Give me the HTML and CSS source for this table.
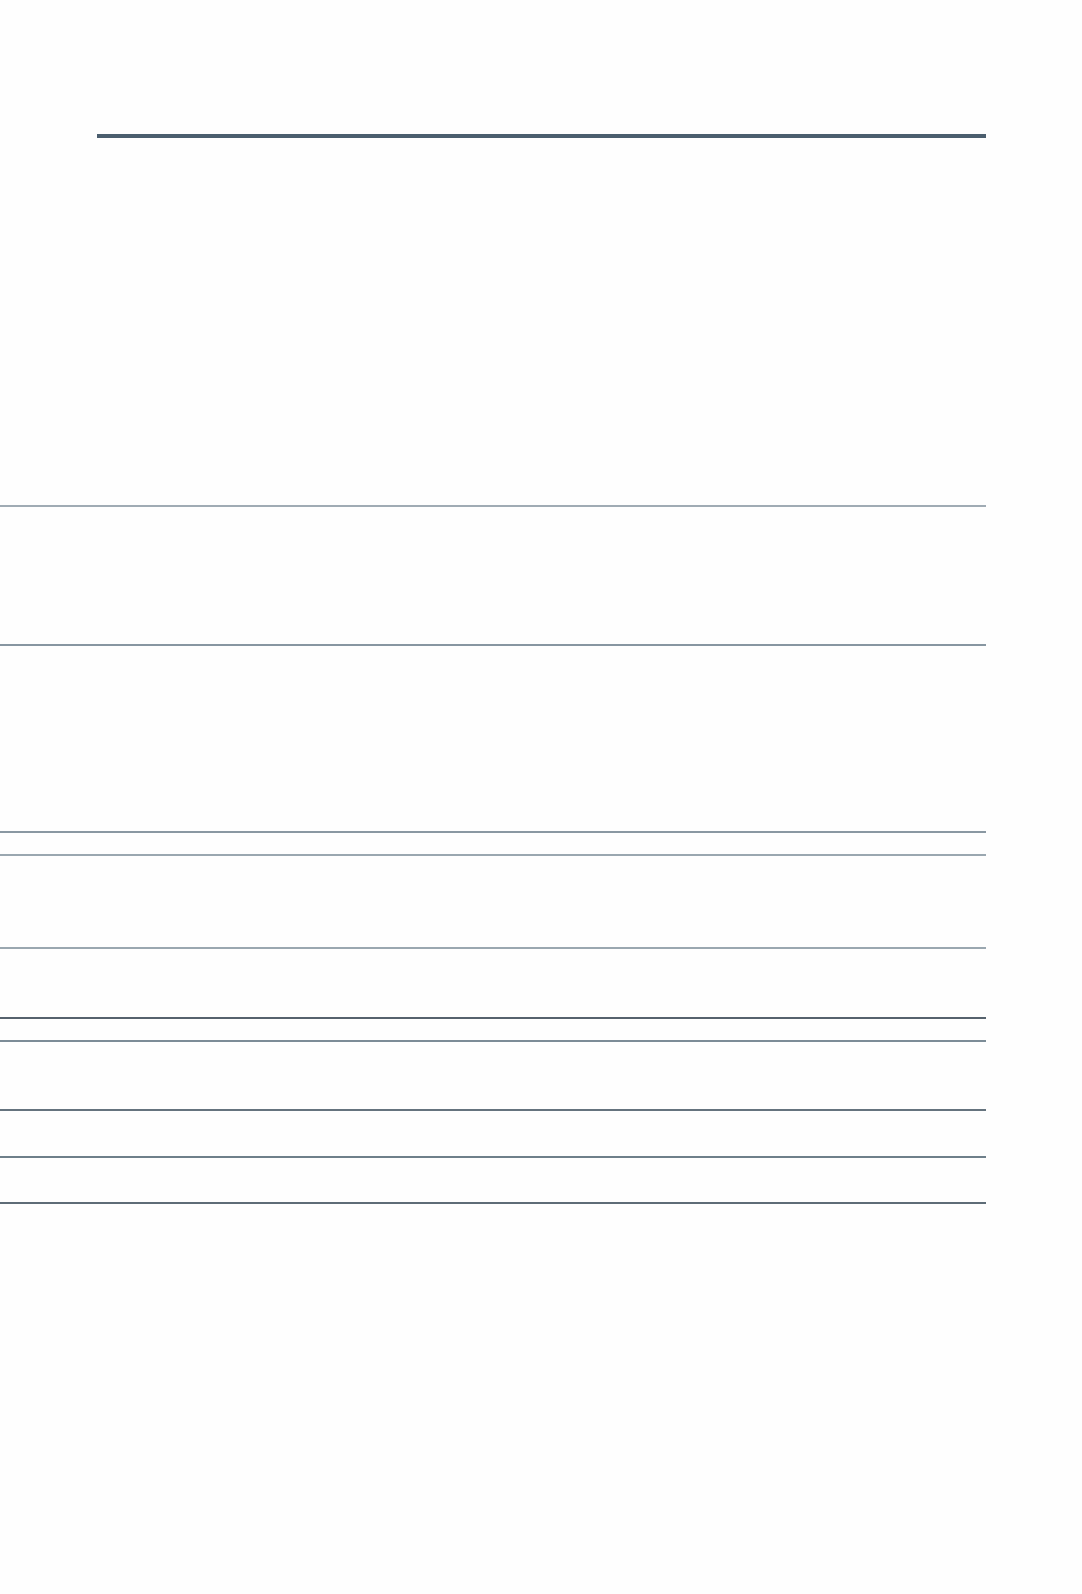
FILE: index.html
```html
<!DOCTYPE html>
<html lang="en">
<head>
    <meta charset="UTF-8">
    <meta name="viewport" content="width=device-width, initial-scale=1.0">
    <title>Sheet</title>
    <link rel="stylesheet" href="styles.css">
</head>
<body>
    <div class="sheet">
        <div class="sheet-rule"></div>
        <div class="sheet-head"></div>
        <div class="sheet-body">
            <div class="row row-1 first"><span></span><span></span><span></span><span></span><span></span><span></span><span></span><span></span></div>
            <div class="row row-2"><span></span><span></span><span></span><span></span><span></span><span></span><span></span><span></span></div>
            <div class="row row-3"><span></span><span></span><span></span><span></span><span></span><span></span><span></span><span></span></div>
            <div class="row row-4"><span></span><span></span><span></span><span></span><span></span><span></span><span></span><span></span></div>
            <div class="row row-5"><span></span><span></span><span></span><span></span><span></span><span></span><span></span><span></span></div>
            <div class="row row-6"><span></span><span></span><span></span><span></span><span></span><span></span><span></span><span></span></div>
            <div class="row row-7"><span></span><span></span><span></span><span></span><span></span><span></span><span></span><span></span></div>
            <div class="row row-8"><span></span><span></span><span></span><span></span><span></span><span></span><span></span><span></span></div>
            <div class="row row-9"><span></span><span></span><span></span><span></span><span></span><span></span><span></span><span></span></div>
        </div>
    </div>
</body>
</html>
```

FILE: styles.css
```css
body {
    margin: 0;
    padding: 0;
    background-color: #fefefe;
    font-family: "Liberation Sans", Arial, sans-serif;
}
.sheet {
    width: 986px;
    padding-top: 134px;
}
.sheet-rule {
    margin-left: 97px;
    height: 4px;
    background-color: #4b5e6e;
}
.sheet-head {
    height: 367px;
}
.row {
    display: grid;
    grid-template-columns: 97px 125px 137px 114px 136px 114px 148px 115px;
    border-bottom: 2px solid #9aa7b0;
}
.row.first {
    border-top: 2px solid #a0abb4;
}
.row-1 { height: 137px; border-bottom-color: #8796a1; }
.row-2 { height: 185px; border-bottom-color: #8a98a2; }
.row-3 { height: 21px; }
.row-4 { height: 91px; }
.row-5 { height: 68px; border-bottom-color: #56626d; }
.row-6 { height: 21px; border-bottom-color: #7c8c97; }
.row-7 { height: 67px; border-bottom-color: #65737e; }
.row-8 { height: 45px; border-bottom-color: #6e7f8a; }
.row-9 { height: 44px; border-bottom-color: #5e6c77; }
```
